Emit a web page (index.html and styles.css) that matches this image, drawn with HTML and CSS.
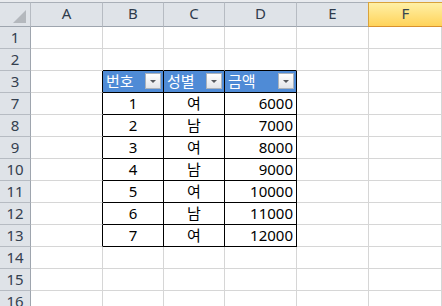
FILE: index.html
```html
<!DOCTYPE html>
<html lang="ko">
<head>
<meta charset="UTF-8">
<title>Sheet1</title>
<link rel="stylesheet" href="styles.css">
</head>
<body>
<div class="sheet">
  <!-- column headers -->
  <div class="hd corner"><svg width="14" height="14" viewBox="0 0 14 14"><polygon points="13,0 13,13 0,13" fill="#b4b8bd"/></svg></div>
  <div class="hd">A</div>
  <div class="hd">B</div>
  <div class="hd">C</div>
  <div class="hd">D</div>
  <div class="hd">E</div>
  <div class="hd sel">F</div>

  <div class="rh">1</div><div class="c"></div><div class="c"></div><div class="c"></div><div class="c"></div><div class="c"></div><div class="c"></div>
  <div class="rh">2</div><div class="c"></div><div class="c ab"></div><div class="c ab"></div><div class="c ab"></div><div class="c"></div><div class="c"></div>

  <div class="rh">3</div><div class="c lt"></div>
  <div class="c t th">번호<span class="flt"></span></div>
  <div class="c t th">성별<span class="flt"></span></div>
  <div class="c t th">금액<span class="flt"></span></div>
  <div class="c"></div><div class="c"></div>

  <div class="rh">7</div><div class="c lt"></div><div class="c t mid">1</div><div class="c t mid">여</div><div class="c t num">6000</div><div class="c"></div><div class="c"></div>
  <div class="rh">8</div><div class="c lt"></div><div class="c t mid">2</div><div class="c t mid">남</div><div class="c t num">7000</div><div class="c"></div><div class="c"></div>
  <div class="rh">9</div><div class="c lt"></div><div class="c t mid">3</div><div class="c t mid">여</div><div class="c t num">8000</div><div class="c"></div><div class="c"></div>
  <div class="rh">10</div><div class="c lt"></div><div class="c t mid">4</div><div class="c t mid">남</div><div class="c t num">9000</div><div class="c"></div><div class="c"></div>
  <div class="rh">11</div><div class="c lt"></div><div class="c t mid">5</div><div class="c t mid">여</div><div class="c t num">10000</div><div class="c"></div><div class="c"></div>
  <div class="rh">12</div><div class="c lt"></div><div class="c t mid">6</div><div class="c t mid">남</div><div class="c t num">11000</div><div class="c"></div><div class="c"></div>
  <div class="rh">13</div><div class="c lt"></div><div class="c t mid">7</div><div class="c t mid">여</div><div class="c t num">12000</div><div class="c"></div><div class="c"></div>

  <div class="rh">14</div><div class="c"></div><div class="c"></div><div class="c"></div><div class="c"></div><div class="c"></div><div class="c"></div>
  <div class="rh">15</div><div class="c"></div><div class="c"></div><div class="c"></div><div class="c"></div><div class="c"></div><div class="c"></div>
  <div class="rh">16</div><div class="c"></div><div class="c"></div><div class="c"></div><div class="c"></div><div class="c"></div><div class="c"></div>
</div>
</body>
</html>
```

FILE: styles.css
```css
body {
  margin: 0;
  background: #ffffff;
  font-family: "Noto Sans", "Noto Sans CJK KR", sans-serif;
  font-size: 15px;
  color: #000000;
  overflow: hidden;
}

.sheet {
  display: grid;
  grid-template-columns: 31px 72px 61px 61px 72px 72px 73px;
  grid-template-rows: 25px repeat(13, 22px);
  padding-top: 2px;
  background: #e9ebee;
}

/* column headers */
.hd {
  background: #dfe3e8;
  border-top: 1px solid #a9afb7;
  border-right: 1px solid #b6bbc2;
  border-bottom: 1px solid #9ea5ae;
  color: #2f3b4c;
  text-align: center;
  line-height: 21px;
}

.corner {
  display: flex;
  align-items: flex-end;
  justify-content: flex-end;
  padding: 0 3px 2px 0;
}

.hd.sel {
  background: linear-gradient(#fff0a6, #ffd35a);
  border-top-color: #d9a23a;
  border-bottom-color: #d9912e;
  border-left: 1px solid #d9a23a;
  border-right: none;
  color: #36454f;
  margin-left: -1px;
}

/* row headers */
.rh {
  background: #dfe3e8;
  border-right: 1px solid #9ea5ae;
  border-bottom: 1px solid #b6bbc2;
  color: #34404f;
  text-align: center;
  line-height: 21px;
}

/* plain cells */
.c {
  background: #ffffff;
  border-right: 1px solid #d6d6d6;
  border-bottom: 1px solid #d6d6d6;
  line-height: 21px;
  padding: 0 3px;
  white-space: nowrap;
}

.ab {
  border-bottom-color: #000000;
}

.lt {
  border-right-color: #000000;
}

/* table */
.t {
  border-right-color: #000000;
  border-bottom-color: #000000;
}

.th {
  position: relative;
  background: #4f8bd6;
  color: #ffffff;
}

.flt {
  position: absolute;
  right: 2px;
  top: 2px;
  width: 14px;
  height: 14px;
  border: 1px solid #aab2bb;
  background: linear-gradient(#ffffff, #e2e5e9);
}

.flt::after {
  content: "";
  position: absolute;
  left: 4px;
  top: 6px;
  border-left: 3px solid transparent;
  border-right: 3px solid transparent;
  border-top: 3px solid #55595e;
}

.mid {
  text-align: center;
}

.num {
  text-align: right;
}
```
